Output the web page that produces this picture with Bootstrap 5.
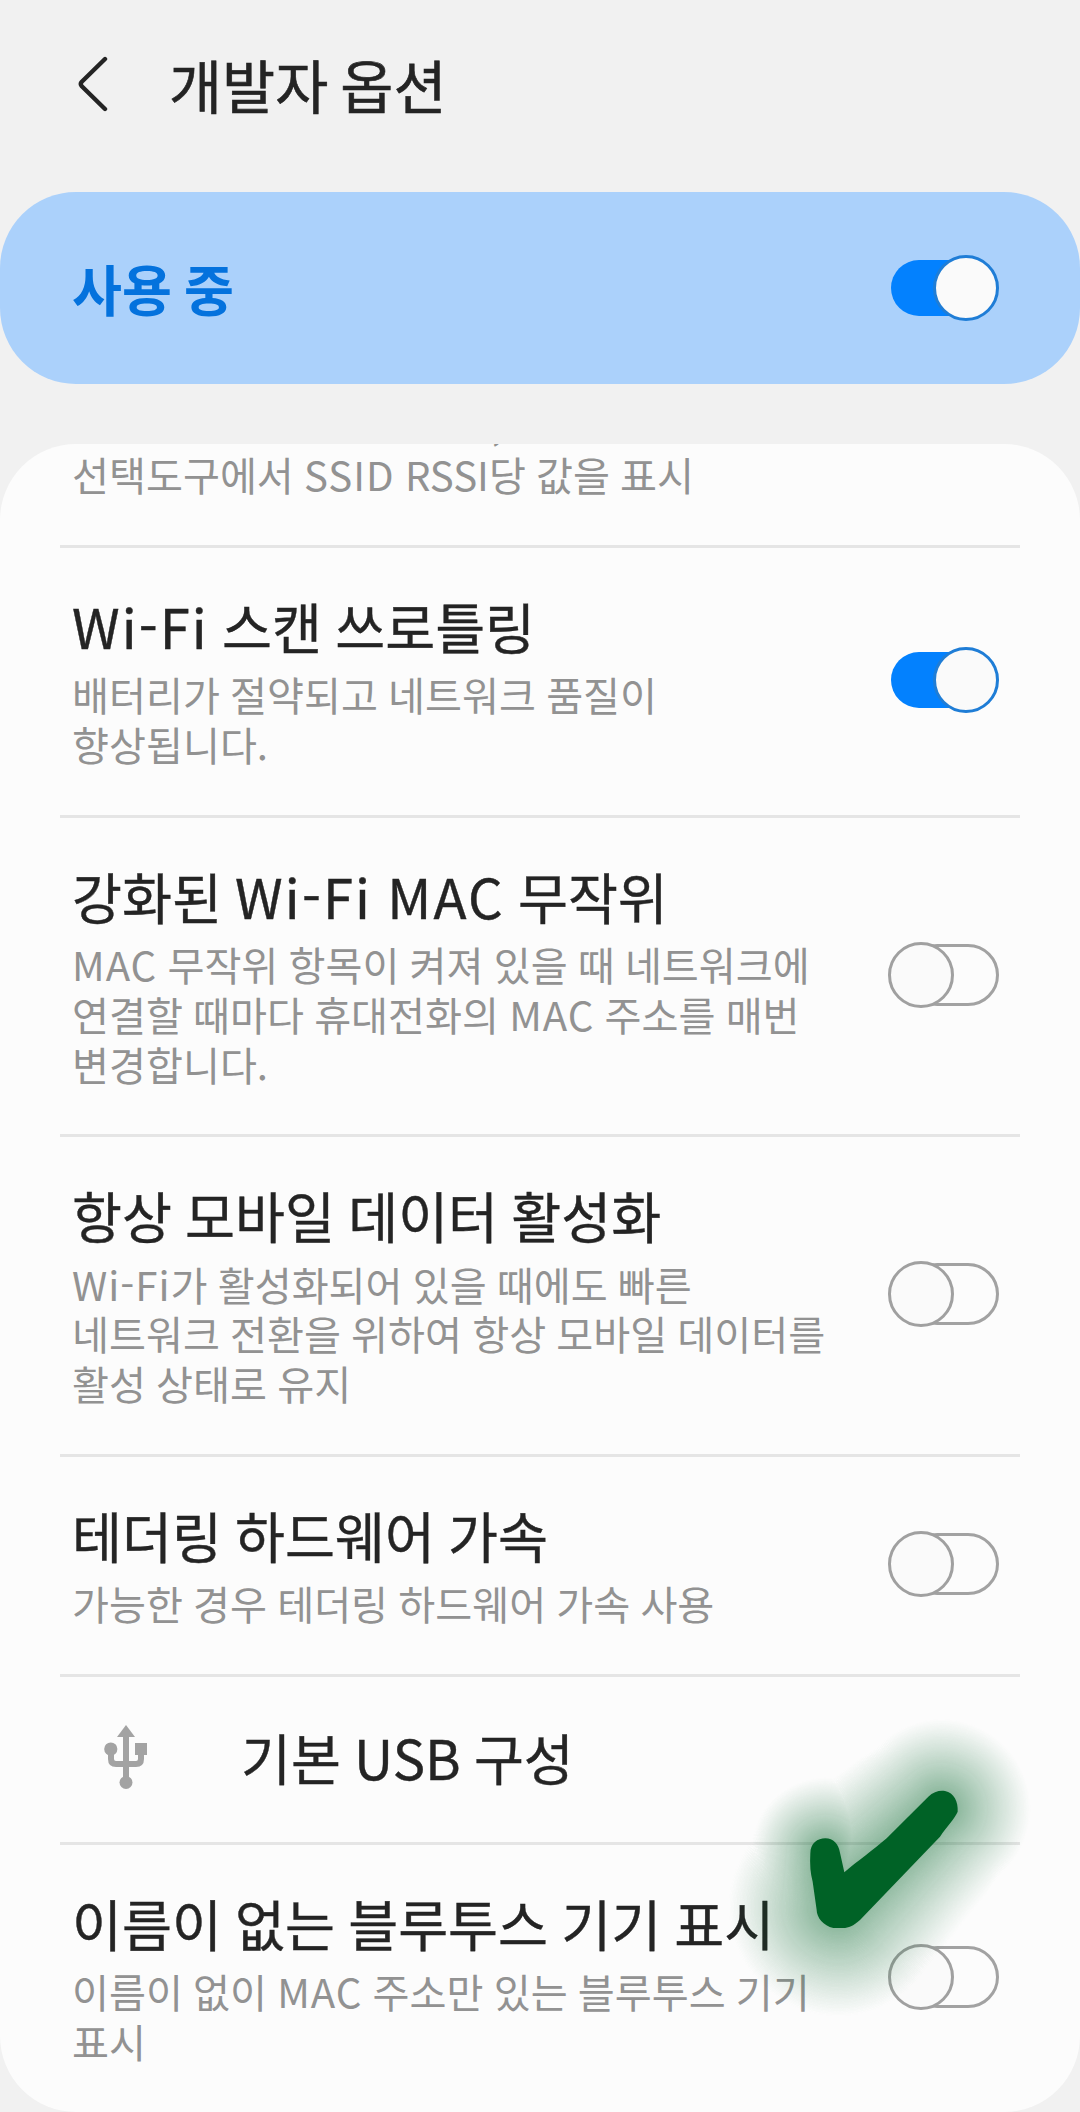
<!DOCTYPE html>
<html lang="ko">
<head>
<meta charset="utf-8">
<meta name="viewport" content="width=device-width, initial-scale=1">
<title>개발자 옵션</title>
<link href="https://cdn.jsdelivr.net/npm/bootstrap@5.3.0/dist/css/bootstrap.min.css" rel="stylesheet">
<style>
  body { background: #f1f1f1; font-family: "Noto Sans CJK KR", sans-serif; color: #242424; width: 1080px; height: 2112px; overflow: hidden; }
  .top-bar { height: 192px; padding: 0 74px 25px 77px; }
  .page-title { font-size: 57.7px; line-height: 72px; word-spacing: -4px; margin-left: 60px; -webkit-text-stroke: .6px #242424; }
  .master { height: 192px; border-radius: 76px; background: #abd1fb; padding: 0 81px 0 72px; }
  .master-label { font-size: 54.3px; line-height: 72px; font-weight: 700; word-spacing: -3px; color: #0472dd; }
  .panel { margin-top: 60px; height: 1668px; border-radius: 76px; background: #fcfcfc; overflow: hidden; }
  .setting { margin: 0 60px; padding: 42px 21px 46px 12px; border-top: 3px solid #e5e5e5; }
  .setting-cut { height: 101px; border-top: 0; padding-top: 0; padding-bottom: 45.5px; overflow: hidden; }
  .setting-cut .setting-note { line-height: 50.7px; }
  .setting-title { font-size: 54.3px; line-height: 72px; margin-bottom: 7.4px; word-spacing: -2px; -webkit-text-stroke: .4px #242424; }
  .setting-title .latin { letter-spacing: 2.1px; }
  .setting-note { font-size: 40.2px; line-height: 49.7px; word-spacing: -1.1px; color: #929292; }
  .setting-note .latin { letter-spacing: 1px; }
  .setting-usb { height: 168px; padding: 0 0 4px 43px; }
  .setting-usb .setting-title { margin: 0 0 0 93px; }
  .toggle { width: 111px; height: 66px; }
  .setting .toggle { margin-top: 1px; }
  .stamp { left: 700px; top: 1680px; width: 380px; height: 432px; pointer-events: none; }
</style>
</head>
<body class="position-relative">
<svg class="position-absolute" width="0" height="0">
  <symbol id="sw-on" viewBox="0 0 111 66">
    <rect x="3" y="5" width="100" height="56" rx="28" fill="#0381fe"/>
    <circle cx="78" cy="33" r="31.5" fill="#fafafa" stroke="#1f7dd6" stroke-width="3"/>
  </symbol>
  <symbol id="sw-off" viewBox="0 0 111 66">
    <rect x="20" y="3.5" width="89.5" height="59" rx="29.5" fill="#fcfcfc" stroke="#a2a2a2" stroke-width="3"/>
    <circle cx="33" cy="33" r="31.5" fill="#fafafa" stroke="#a0a0a0" stroke-width="3"/>
  </symbol>
</svg>

<header class="top-bar d-flex align-items-center">
  <svg width="32" height="56" viewBox="0 0 32 56" fill="none" stroke="#242424" stroke-width="4.4" stroke-linecap="round" stroke-linejoin="round"><path d="M28 3 4.800 25.800Q2.800 28 4.800 30.200L28 53"/></svg>
  <h1 class="page-title fw-normal mb-0">개발자 옵션</h1>
</header>

<section class="master d-flex align-items-center justify-content-between">
  <span class="master-label">사용 중</span>
  <svg class="toggle"><use href="#sw-on"/></svg>
</section>

<main class="panel d-flex flex-column">
  <div class="setting setting-cut d-flex align-items-end flex-shrink-0">
    <div class="setting-note">Wi-Fi 로깅 수준을 높이고, Wi-Fi<br>선택도구에서 <span class="latin">SSID</span> RSSI당 값을 표시</div>
  </div>
  <div class="setting d-flex align-items-center justify-content-between">
    <div class="text-nowrap">
      <div class="setting-title"><span class="latin">Wi-Fi</span> 스캔 쓰로틀링</div>
      <div class="setting-note">배터리가 절약되고 네트워크 품질이<br>향상됩니다.</div>
    </div>
    <svg class="toggle flex-shrink-0"><use href="#sw-on"/></svg>
  </div>
  <div class="setting d-flex align-items-center justify-content-between">
    <div class="text-nowrap">
      <div class="setting-title">강화된 <span class="latin">Wi-Fi MAC</span> 무작위</div>
      <div class="setting-note"><span class="latin">MAC</span> 무작위 항목이 켜져 있을 때 네트워크에<br>연결할 때마다 휴대전화의 <span class="latin">MAC</span> 주소를 매번<br>변경합니다.</div>
    </div>
    <svg class="toggle flex-shrink-0"><use href="#sw-off"/></svg>
  </div>
  <div class="setting d-flex align-items-center justify-content-between">
    <div class="text-nowrap">
      <div class="setting-title">항상 모바일 데이터 활성화</div>
      <div class="setting-note"><span class="latin">Wi-Fi</span>가 활성화되어 있을 때에도 빠른<br>네트워크 전환을 위하여 항상 모바일 데이터를<br>활성 상태로 유지</div>
    </div>
    <svg class="toggle flex-shrink-0"><use href="#sw-off"/></svg>
  </div>
  <div class="setting d-flex align-items-center justify-content-between">
    <div class="text-nowrap">
      <div class="setting-title">테더링 하드웨어 가속</div>
      <div class="setting-note">가능한 경우 테더링 하드웨어 가속 사용</div>
    </div>
    <svg class="toggle flex-shrink-0"><use href="#sw-off"/></svg>
  </div>
  <div class="setting setting-usb d-flex align-items-center">
    <svg width="45" height="66" viewBox="0 0 45 66" fill="#a3a3a3">
      <path d="M23 1 32 13H14Z"/>
      <rect x="20" y="11" width="6" height="44"/>
      <circle cx="23" cy="58.500" r="6.500"/>
      <circle cx="7.800" cy="25" r="6.600"/>
      <rect x="32" y="19" width="12" height="12"/>
      <path d="M8 28V35Q8 40 13 40H33Q38 40 38 35V29" fill="none" stroke="#a3a3a3" stroke-width="6"/>
    </svg>
    <div class="setting-title">기본 USB 구성</div>
  </div>
  <div class="setting d-flex align-items-center justify-content-between">
    <div class="text-nowrap">
      <div class="setting-title">이름이 없는 블루투스 기기 표시</div>
      <div class="setting-note">이름이 없이 <span class="latin">MAC</span> 주소만 있는 블루투스 기기<br>표시</div>
    </div>
    <svg class="toggle flex-shrink-0"><use href="#sw-off"/></svg>
  </div>
</main>

<svg class="stamp position-absolute" viewBox="0 0 1140 1296">
  <mask id="halo" maskUnits="userSpaceOnUse" x="0" y="0" width="1140" height="1296">
    <g id="rings"></g>
  </mask>
  <rect width="1140" height="1296" fill="#006226" mask="url(#halo)"/>
  <path fill="#006226" d="M331 520C331 490 353 475 376 475C400 475 416 492 420 518L433 577C470 545 520 510 560 475L685 350C700 335 720 330 735 333C762 338 775 365 773 395C765 415 740 440 720 470L480 720C460 738 445 744 430 744L400 744C370 738 350 712 350 690L338 605Q328 570 331 520Z"/>
</svg>

<script src="https://cdn.jsdelivr.net/npm/bootstrap@5.3.0/dist/js/bootstrap.bundle.min.js"></script>
<script>
  // Soft halo: brush circles along the tick's centre line, scaled up per level,
  // drawn from the widest and faintest to the narrowest and brightest
  const rings = document.getElementById('rings');
  const spine = [[376, 520, 45], [388, 600, 52], [415, 680, 65], [570, 532, 58], [724, 385, 53]];
  const dots = [];
  for (let s = 0; s < spine.length - 1; s++) {
    const n = s < 2 ? 8 : 20;
    for (let i = 0; i <= n; i++) dots.push(spine[s].map((v, k) => v + (spine[s + 1][k] - v) * i / n));
  }
  const steps = 64, spread = 4.15;
  for (let i = steps; i >= 0; i--) {
    const t = i / steps;
    const v = Math.round(255 * 0.43 * Math.pow(1 - t, 1.1));
    const g = document.createElementNS('http://www.w3.org/2000/svg', 'g');
    g.setAttribute('fill', `rgb(${v},${v},${v})`);
    for (const [x, y, r] of dots) {
      const c = document.createElementNS('http://www.w3.org/2000/svg', 'circle');
      c.setAttribute('cx', x);
      c.setAttribute('cy', y);
      c.setAttribute('r', r * (1 + spread * t));
      g.appendChild(c);
    }
    rings.appendChild(g);
  }
</script>
</body>
</html>
